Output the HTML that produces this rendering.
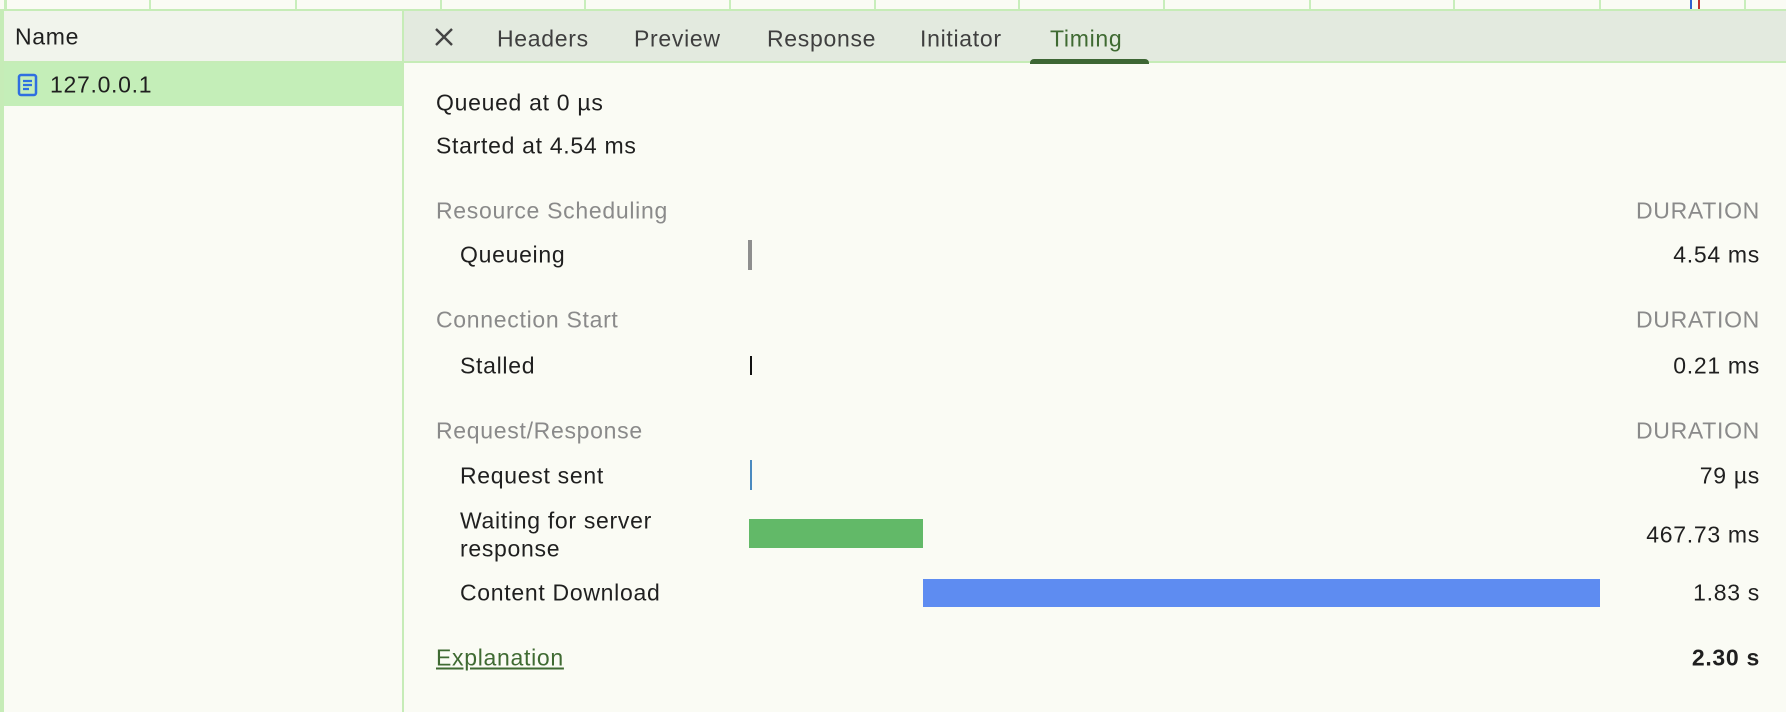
<!DOCTYPE html>
<html><head><meta charset="utf-8"><style>
*{margin:0;padding:0;box-sizing:border-box}
body{width:1786px;height:712px;overflow:hidden;background:#fafbf4;font-family:"Liberation Sans",Arial,sans-serif;font-size:23px;letter-spacing:0.7px;color:#1f1f1f;position:relative}
.a{position:absolute;white-space:nowrap}
.v{position:absolute;top:0;height:9px;width:2px;background:#c8eebb}
.c{transform:translateY(-50%)}
.g{color:#8a8a8a}
.r{right:26px}
</style></head><body>
<div class="a" style="left:0;top:0;width:1786px;height:9px;background:#fafbf4"></div>
<div class="v" style="left:4px;width:3px"></div>
<div class="v" style="left:149px"></div><div class="v" style="left:295px"></div><div class="v" style="left:440px"></div><div class="v" style="left:584px"></div><div class="v" style="left:729px"></div><div class="v" style="left:874px"></div><div class="v" style="left:1018px"></div><div class="v" style="left:1163px"></div><div class="v" style="left:1309px"></div><div class="v" style="left:1453px"></div><div class="v" style="left:1599px"></div><div class="v" style="left:1744px"></div>
<div class="v" style="left:1690px;background:#3060d0"></div><div class="v" style="left:1698px;background:#c03030"></div>
<div class="a" style="left:0;top:9px;width:1786px;height:2px;background:#c6ecb7"></div>
<div class="a" style="left:3px;top:11px;width:400px;height:52px;background:#f1f4ec;border-bottom:2px solid #c6ecb7"></div>
<div class="a" style="left:0;top:11px;width:4px;height:701px;background:#c6ecb7"></div>
<div class="a c" style="left:15px;top:37px">Name</div>
<div class="a" style="left:4px;top:63px;width:399px;height:43px;background:#c4eeb8"></div>
<svg class="a" style="left:17px;top:73px" width="22" height="24" viewBox="0 0 22 24"><rect x="2" y="2" width="17" height="20" rx="2" fill="none" stroke="#2f6fe0" stroke-width="2.5"/><path d="M6 8h9M6 12h9M6 16h6" stroke="#2f6fe0" stroke-width="2.2"/></svg>
<div class="a c" style="left:50px;top:85px">127.0.0.1</div>
<div class="a" style="left:402px;top:11px;width:2px;height:701px;background:#c6ecb7"></div>
<div class="a" style="left:404px;top:11px;width:1382px;height:52px;background:#e3eadf;border-bottom:2px solid #c6ecb7"></div>
<svg class="a" style="left:434px;top:27px" width="20" height="20" viewBox="0 0 20 20"><path d="M2 2L18 18M18 2L2 18" stroke="#444" stroke-width="2.4"/></svg>
<div class="a c" style="left:497px;top:39px;color:#3f3f3f">Headers</div>
<div class="a c" style="left:634px;top:39px;color:#3f3f3f">Preview</div>
<div class="a c" style="left:767px;top:39px;color:#3f3f3f">Response</div>
<div class="a c" style="left:920px;top:39px;color:#3f3f3f">Initiator</div>
<div class="a c" style="left:1050px;top:39px;color:#3f6a32">Timing</div>
<div class="a" style="left:1030px;top:59px;width:119px;height:5px;background:#3d6634;border-radius:4px 4px 0 0"></div>
<div class="a c" style="left:436px;top:103px">Queued at 0 µs</div>
<div class="a c" style="left:436px;top:146px">Started at 4.54 ms</div>
<div class="a c g" style="left:436px;top:211px">Resource Scheduling</div><div class="a c g r" style="top:211px">DURATION</div>
<div class="a c" style="left:460px;top:255px">Queueing</div><div class="a c r" style="top:255px">4.54 ms</div>
<div class="a" style="left:748px;top:240px;width:4px;height:30px;background:#8e8e8e"></div>
<div class="a c g" style="left:436px;top:320px">Connection Start</div><div class="a c g r" style="top:320px">DURATION</div>
<div class="a c" style="left:460px;top:366px">Stalled</div><div class="a c r" style="top:366px">0.21 ms</div>
<div class="a" style="left:750px;top:356px;width:2px;height:19px;background:#111"></div>
<div class="a c g" style="left:436px;top:431px">Request/Response</div><div class="a c g r" style="top:431px">DURATION</div>
<div class="a c" style="left:460px;top:476px">Request sent</div><div class="a c r" style="top:476px">79 µs</div>
<div class="a" style="left:750px;top:460px;width:2px;height:30px;background:#4a8ac0"></div>
<div class="a c" style="left:460px;top:521px">Waiting for server</div>
<div class="a c" style="left:460px;top:549px">response</div>
<div class="a c r" style="top:535px">467.73 ms</div>
<div class="a" style="left:749px;top:519px;width:174px;height:29px;background:#62b968"></div>
<div class="a c" style="left:460px;top:593px">Content Download</div><div class="a c r" style="top:593px">1.83 s</div>
<div class="a" style="left:923px;top:579px;width:677px;height:28px;background:#5e8cf1"></div>
<div class="a c" style="left:436px;top:658px;color:#3f6a32;text-decoration:underline">Explanation</div>
<div class="a c r" style="top:658px;font-weight:bold">2.30 s</div>
</body></html>
